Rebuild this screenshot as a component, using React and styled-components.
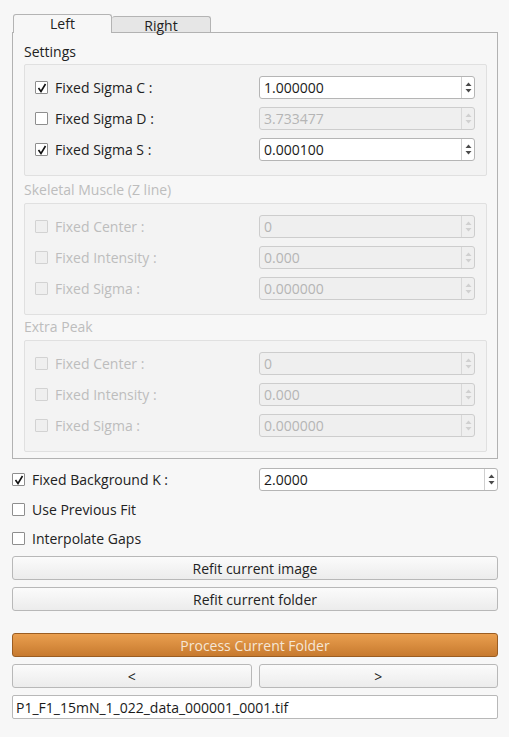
import React from "react";
import styled, { createGlobalStyle, css } from "styled-components";

const GlobalStyle = createGlobalStyle`
  html, body {
    margin: 0;
    padding: 0;
    background: #f7f7f7;
  }
  body {
    font-family: "Open Sans", "DejaVu Sans", sans-serif;
    font-size: 14px;
    color: #222222;
  }
`;

const Page = styled.div`
  width: 509px;
  height: 737px;
  box-sizing: border-box;
  padding: 14px 11px 0 12px;
  background: #f7f7f7;
`;

const TabBar = styled.div`
  display: flex;
  align-items: flex-end;
  padding-left: 1px;
  height: 18px;
`;

const Tab = styled.div`
  width: 99px;
  box-sizing: border-box;
  text-align: center;
  border: 1px solid #b4b4b4;
  border-bottom: none;
  border-radius: 3px 3px 0 0;
  color: #222222;
  ${(p) =>
    p.active
      ? css`
          height: 19px;
          line-height: 18px;
          background: #f7f7f7;
          position: relative;
          top: 1px;
          z-index: 1;
        `
      : css`
          height: 16px;
          line-height: 18px;
          background: #e6e6e6;
          border-left: none;
        `}
`;

const Panel = styled.div`
  border: 1px solid #b2b2b2;
  padding: 9px 10px 6px 11px;
  display: flex;
  flex-direction: column;
`;

const SectionTitle = styled.div`
  height: 20px;
  line-height: 20px;
  padding-top: ${(p) => p.space}px;
  margin-bottom: ${(p) => (p.space ? "3px" : "2px")};
  color: ${(p) => (p.disabled ? "#bdbdbd" : "#222222")};
`;

const GroupBox = styled.div`
  border: 1px solid #e0e0e0;
  border-radius: 2px;
  background: #f3f3f3;
  padding: 11px 11px 14px 10px;
  display: flex;
  flex-direction: column;
  gap: 8px;
`;

const Row = styled.div`
  display: grid;
  grid-template-columns: ${(p) => p.labelWidth}px 1fr;
  align-items: center;
  height: 23px;
`;

const CheckLabel = styled.label`
  display: flex;
  align-items: center;
  gap: 7px;
  color: ${(p) => (p.disabled ? "#bdbdbd" : "#222222")};
  white-space: nowrap;
`;

const Box = styled.span`
  width: 13px;
  height: 13px;
  box-sizing: border-box;
  border: 1px solid ${(p) => (p.disabled ? "#d2d2d2" : "#8e8e8e")};
  background: ${(p) => (p.disabled ? "#efefef" : "#ffffff")};
  border-radius: 1px;
  display: flex;
  align-items: center;
  justify-content: center;
  flex: none;
`;

const Spin = styled.div`
  height: 23px;
  box-sizing: border-box;
  border: 1px solid ${(p) => (p.disabled ? "#cdcdcd" : "#b5b5b5")};
  border-radius: 3px;
  background: ${(p) => (p.disabled ? "#efefef" : "#ffffff")};
  display: flex;
  align-items: center;
`;

const SpinText = styled.div`
  flex: 1;
  padding-left: 4px;
  color: ${(p) => (p.disabled ? "#b5b5b5" : "#1a1a1a")};
`;

const SpinArrows = styled.div`
  width: 12px;
  height: 100%;
  border-left: 1px solid ${(p) => (p.disabled ? "#d8d8d8" : "#cfcfcf")};
  display: flex;
  align-items: center;
  justify-content: center;
`;

const Outer = styled.div`
  display: flex;
  flex-direction: column;
  padding-top: 9px;
`;

const PlainRow = styled.div`
  height: 29px;
  display: flex;
  align-items: center;
  margin-top: ${(p) => p.top || 0}px;
`;

const Button = styled.div`
  height: 24px;
  flex: none;
  box-sizing: border-box;
  border: 1px solid #b8b8b8;
  border-radius: 3px;
  background: linear-gradient(#fbfbfb, #ececec);
  display: flex;
  align-items: center;
  justify-content: center;
  color: #222222;
  margin-top: ${(p) => p.top || 0}px;
`;

const ProcessButton = styled(Button)`
  border-color: #9b5d22;
  background: linear-gradient(#ea9f4f, #c77a2f);
  color: #f5e6d6;
`;

const ButtonPair = styled.div`
  display: grid;
  grid-template-columns: 1fr 1fr;
  gap: 7px;
  margin-top: 7px;
`;

const FileField = styled.div`
  height: 24px;
  box-sizing: border-box;
  margin-top: 7px;
  border: 1px solid #b8b8b8;
  border-radius: 2px;
  background: #ffffff;
  display: flex;
  align-items: center;
  padding-left: 3px;
  color: #1a1a1a;
`;

function Check({ checked, disabled }) {
  return (
    <Box disabled={disabled}>
      {checked && (
        <svg width="10" height="10" viewBox="0 0 10 10">
          <path d="M1.5 5 L4 8.5 L8.5 1" fill="none" stroke="#111" strokeWidth="1.6" />
        </svg>
      )}
    </Box>
  );
}

function Arrows({ disabled }) {
  const c = disabled ? "#d0d0d0" : "#4a4a4a";
  return (
    <svg width="7" height="11" viewBox="0 0 7 11">
      <path d="M0.5 4 L3.5 0.5 L6.5 4 Z" fill={c} />
      <path d="M0.5 7 L3.5 10.5 L6.5 7 Z" fill={c} />
    </svg>
  );
}

function SpinBox({ value, disabled }) {
  return (
    <Spin disabled={disabled}>
      <SpinText disabled={disabled}>{value}</SpinText>
      <SpinArrows disabled={disabled}>
        <Arrows disabled={disabled} />
      </SpinArrows>
    </Spin>
  );
}

function FieldRow({ label, value, checked, disabled, spinDisabled, labelWidth = 224 }) {
  return (
    <Row labelWidth={labelWidth}>
      <CheckLabel disabled={disabled}>
        <Check checked={checked} disabled={disabled} />
        {label}
      </CheckLabel>
      <SpinBox value={value} disabled={disabled || spinDisabled} />
    </Row>
  );
}

const sections = [
  {
    title: "Settings",
    disabled: false,
    space: 0,
    rows: [
      { label: "Fixed Sigma C :", value: "1.000000", checked: true },
      { label: "Fixed Sigma D :", value: "3.733477", checked: false, spinDisabled: true },
      { label: "Fixed Sigma S :", value: "0.000100", checked: true },
    ],
  },
  {
    title: "Skeletal Muscle (Z line)",
    disabled: true,
    space: 4,
    rows: [
      { label: "Fixed Center :", value: "0" },
      { label: "Fixed Intensity :", value: "0.000" },
      { label: "Fixed Sigma :", value: "0.000000" },
    ],
  },
  {
    title: "Extra Peak",
    disabled: true,
    space: 2,
    rows: [
      { label: "Fixed Center :", value: "0" },
      { label: "Fixed Intensity :", value: "0.000" },
      { label: "Fixed Sigma :", value: "0.000000" },
    ],
  },
];

export default function App() {
  return (
    <Page>
      <GlobalStyle />
      <TabBar>
        <Tab active>Left</Tab>
        <Tab>Right</Tab>
      </TabBar>
      <Panel>
        {sections.map((s) => (
          <React.Fragment key={s.title}>
            <SectionTitle space={s.space} disabled={s.disabled}>
              {s.title}
            </SectionTitle>
            <GroupBox>
              {s.rows.map((r) => (
                <FieldRow
                  key={r.label}
                  label={r.label}
                  value={r.value}
                  checked={r.checked}
                  disabled={s.disabled}
                  spinDisabled={r.spinDisabled}
                />
              ))}
            </GroupBox>
          </React.Fragment>
        ))}
      </Panel>
      <Outer>
        <FieldRow label="Fixed Background K :" value="2.0000" checked labelWidth={247} />
        <PlainRow top={4}>
          <CheckLabel>
            <Check />
            Use Previous Fit
          </CheckLabel>
        </PlainRow>
        <PlainRow>
          <CheckLabel>
            <Check />
            Interpolate Gaps
          </CheckLabel>
        </PlainRow>
        <Button top={3}>Refit current image</Button>
        <Button top={7}>Refit current folder</Button>
        <ProcessButton top={22}>Process Current Folder</ProcessButton>
        <ButtonPair>
          <Button>&lt;</Button>
          <Button>&gt;</Button>
        </ButtonPair>
        <FileField>P1_F1_15mN_1_022_data_000001_0001.tif</FileField>
      </Outer>
    </Page>
  );
}
